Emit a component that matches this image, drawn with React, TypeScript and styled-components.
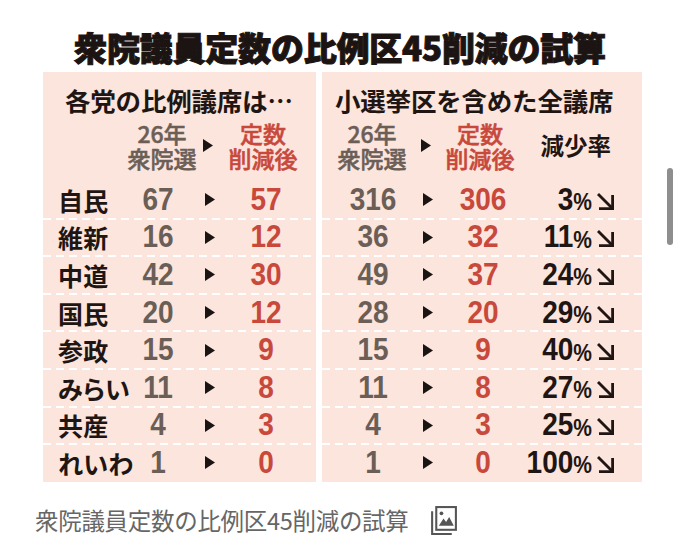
import React from "react";
import styled, { createGlobalStyle } from "styled-components";

const Global = createGlobalStyle`
  html, body { margin: 0; padding: 0; background: #fff; }
  body { font-family: "Noto Sans CJK JP", "Noto Sans", sans-serif; }
`;

const Page = styled.div`
  position: relative;
  width: 680px;
  height: 560px;
  overflow: hidden;
  background: #fff;
`;

const Title = styled.h1`
  margin: 0;
  padding-top: 28px;
  text-align: center;
  font-family: "Noto Sans CJK JP", sans-serif;
  font-size: 33px;
  line-height: 38px;
  font-weight: 900;
  color: #1c1412;
  -webkit-text-stroke: 1px #1c1412;
  letter-spacing: -0.2px;
`;

const Panels = styled.div`
  display: flex;
  gap: 6px;
  margin-top: 6px;
  padding-left: 43px;
`;

const Panel = styled.section<{ $w: number }>`
  width: ${(p) => p.$w}px;
  background: #fbe5dc;
`;

const PanelHead = styled.div<{ $pl: number }>`
  padding: 12px 0 0 ${(p) => p.$pl}px;
  font-size: 25.5px;
  line-height: 32px;
  font-weight: 700;
  color: #1f1513;
  white-space: nowrap;
  letter-spacing: -0.2px;
`;

const SubHead = styled.div`
  display: flex;
  align-items: center;
  height: 50px;
  margin-top: 4px;
  margin-bottom: 11px;
`;

const Row = styled.div<{ $last?: boolean }>`
  position: relative;
  display: flex;
  align-items: center;
  height: 37.6px;
  &::after {
    content: "";
    display: ${(p) => (p.$last ? "none" : "block")};
    position: absolute;
    left: 0;
    right: 0;
    bottom: -1px;
    height: 2px;
    background: repeating-linear-gradient(
      to right,
      #ffffff 0 8px,
      transparent 8px 13px
    );
  }
`;

const Cell = styled.div<{ $w: number; $align?: "center" | "flex-start" | "flex-end" }>`
  flex: none;
  width: ${(p) => p.$w}px;
  display: flex;
  align-items: center;
  justify-content: ${(p) => p.$align ?? "center"};
  white-space: nowrap;
`;

const Party = styled.span`
  font-size: 25px;
  font-weight: 700;
  color: #1f1513;
  font-feature-settings: "palt";
  letter-spacing: 0.3px;
`;

const Num = styled.span<{ $red?: boolean; $dark?: boolean }>`
  display: inline-block;
  font-family: "Liberation Sans", Arial, sans-serif;
  font-weight: 700;
  font-size: 28px;
  line-height: 30px;
  color: ${(p) => (p.$red ? "#c8483c" : p.$dark ? "#1f1513" : "#6b5e57")};
  transform: scaleY(1.12);
`;

const Pct = styled.span`
  display: inline-block;
  font-family: "Liberation Sans", Arial, sans-serif;
  font-weight: 700;
  font-size: 21px;
  color: #1f1513;
  margin-top: 5px;
  transform: scaleY(1.1);
`;

const TwoLine = styled.div<{ $red?: boolean }>`
  display: flex;
  flex-direction: column;
  align-items: center;
  gap: 1px;
  color: ${(p) => (p.$red ? "#c8483c" : "#6b5e57")};
  -webkit-text-stroke: 0.5px ${(p) => (p.$red ? "#c8483c" : "#6b5e57")};
`;

const Line = styled.span`
  display: block;
  font-size: 23px;
  line-height: 24px;
  height: 24px;
  font-weight: 500;
`;

const RateHead = styled.div`
  font-size: 23.5px;
  font-weight: 700;
  color: #1f1513;
`;

const Caption = styled.div`
  display: flex;
  align-items: center;
  margin-top: 23px;
  padding-left: 35px;
  font-size: 23.5px;
  line-height: 30px;
  color: #666;
  font-weight: 400;
  letter-spacing: -0.3px;
`;

const CaptionIcon = styled.svg`
  margin-left: 20px;
  flex: none;
`;

const ScrollThumb = styled.div`
  position: absolute;
  right: 7px;
  top: 168px;
  width: 6px;
  height: 77px;
  border-radius: 3px;
  background: #8e8e8e;
`;

const Tri = () => (
  <svg width="10" height="13" viewBox="0 0 10 13">
    <polygon points="0,0 10,6.5 0,13" fill="#1a1412" />
  </svg>
);

const DownArrow = () => (
  <svg width="19" height="19" viewBox="0 0 19 19" style={{ marginLeft: 4, marginTop: 3 }}>
    <path d="M2 2 L15.5 15.5" stroke="#1f1513" strokeWidth="2.8" fill="none" />
    <path d="M16.6 3 V16.6 H3" stroke="#1f1513" strokeWidth="2.8" fill="none" />
  </svg>
);

type D = { name: string; a: number; b: number; c: number; d: number; r: number };
const data: D[] = [
  { name: "自民", a: 67, b: 57, c: 316, d: 306, r: 3 },
  { name: "維新", a: 16, b: 12, c: 36, d: 32, r: 11 },
  { name: "中道", a: 42, b: 30, c: 49, d: 37, r: 24 },
  { name: "国民", a: 20, b: 12, c: 28, d: 20, r: 29 },
  { name: "参政", a: 15, b: 9, c: 15, d: 9, r: 40 },
  { name: "みらい", a: 11, b: 8, c: 11, d: 8, r: 27 },
  { name: "共産", a: 4, b: 3, c: 4, d: 3, r: 25 },
  { name: "れいわ", a: 1, b: 0, c: 1, d: 0, r: 100 },
];

const OldNew = ({ red }: { red?: boolean }) =>
  red ? (
    <TwoLine $red>
      <Line>定数</Line>
      <Line>削減後</Line>
    </TwoLine>
  ) : (
    <TwoLine>
      <Line>26年</Line>
      <Line>衆院選</Line>
    </TwoLine>
  );

export default function App() {
  return (
    <Page>
      <Global />
      <Title>衆院議員定数の比例区45削減の試算</Title>
      <Panels>
        <Panel $w={273}>
          <PanelHead $pl={22}>各党の比例議席は…</PanelHead>
          <SubHead>
            <Cell $w={91} />
            <Cell $w={56}>
              <OldNew />
            </Cell>
            <Cell $w={36}>
              <Tri />
            </Cell>
            <Cell $w={74}>
              <OldNew red />
            </Cell>
          </SubHead>
          {data.map((d, i) => (
            <Row key={d.name} $last={i === data.length - 1}>
              <Cell $w={15} />
              <Cell $w={72} $align="flex-start">
                <Party>{d.name}</Party>
              </Cell>
              <Cell $w={56}>
                <Num>{d.a}</Num>
              </Cell>
              <Cell $w={48}>
                <Tri />
              </Cell>
              <Cell $w={64}>
                <Num $red>{d.b}</Num>
              </Cell>
            </Row>
          ))}
        </Panel>
        <Panel $w={320}>
          <PanelHead $pl={13}>小選挙区を含めた全議席</PanelHead>
          <SubHead>
            <Cell $w={16} />
            <Cell $w={68}>
              <OldNew />
            </Cell>
            <Cell $w={40}>
              <Tri />
            </Cell>
            <Cell $w={68}>
              <OldNew red />
            </Cell>
            <Cell $w={97} $align="flex-end">
              <RateHead>減少率</RateHead>
            </Cell>
          </SubHead>
          {data.map((d, i) => (
            <Row key={d.name} $last={i === data.length - 1}>
              <Cell $w={16} />
              <Cell $w={70}>
                <Num>{d.c}</Num>
              </Cell>
              <Cell $w={40}>
                <Tri />
              </Cell>
              <Cell $w={70}>
                <Num $red>{d.d}</Num>
              </Cell>
              <Cell $w={97} $align="flex-end">
                <Num $dark>{d.r}</Num>
                <Pct>%</Pct>
                <DownArrow />
              </Cell>
            </Row>
          ))}
        </Panel>
      </Panels>
      <Caption>
        衆院議員定数の比例区45削減の試算
        <CaptionIcon width="29" height="31" viewBox="0 0 28 30">
          <polyline points="3,6 3,28 22,28" fill="none" stroke="#555" strokeWidth="2" />
          <rect x="7" y="2" width="19" height="22" fill="none" stroke="#555" strokeWidth="2" />
          <circle cx="12" cy="8" r="1.8" fill="#555" />
          <polygon points="9.5,20 14,13 16.5,16.5 19.5,11.5 24,20" fill="#555" />
        </CaptionIcon>
      </Caption>
      <ScrollThumb />
    </Page>
  );
}
